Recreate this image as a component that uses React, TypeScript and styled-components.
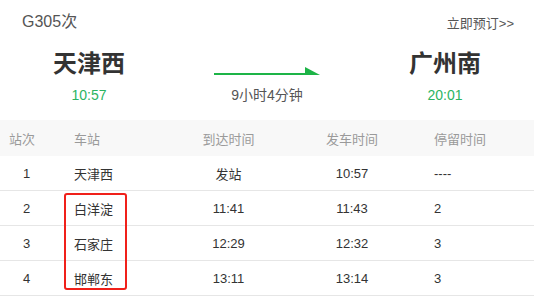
import React from "react";
import styled, { createGlobalStyle } from "styled-components";

const Global = createGlobalStyle`
  html, body { margin: 0; padding: 0; background: #fff; }
  body { font-family: "Liberation Sans", "Noto Sans CJK SC", sans-serif; color: #333; }
`;

const Page = styled.div`
  width: 534px;
  height: 302px;
  overflow: hidden;
`;

const TopBar = styled.div`
  display: flex;
  justify-content: space-between;
  align-items: center;
  padding: 0 20px 0 22px;
  height: 44px;
  line-height: 1;
`;

const TrainNo = styled.div`
  font-size: 16px;
  color: #555;
`;

const BookLink = styled.div`
  font-size: 13px;
  color: #555;
  padding-top: 2px;
`;

const Route = styled.div`
  display: grid;
  grid-template-columns: 1fr 1fr 1fr;
  height: 76px;
`;

const Endpoint = styled.div`
  display: flex;
  flex-direction: column;
  align-items: center;
  padding-top: 8px;
`;

const StationName = styled.div`
  font-size: 24px;
  font-weight: bold;
  color: #333;
  line-height: 24px;
`;

const Time = styled.div`
  font-size: 14px;
  color: #2bb462;
  line-height: 14px;
  margin-top: 12px;
`;

const Middle = styled.div`
  display: flex;
  flex-direction: column;
  align-items: center;
  padding-top: 23px;
`;

const ArrowSvg = styled.svg`
  display: block;
`;

const Duration = styled.div`
  font-size: 14px;
  color: #555;
  line-height: 14px;
  margin-top: 12px;
`;

const Table = styled.div`
  position: relative;
`;

const Row = styled.div<{ $head?: boolean }>`
  display: grid;
  grid-template-columns: 53px 112px 127px 120px 1fr;
  height: ${(p) => (p.$head ? "36px" : "34px")};
  align-items: center;
  background: ${(p) => (p.$head ? "#f8f8f8" : "#fff")};
  border-bottom: ${(p) => (p.$head ? "none" : "1px solid #e6e6e6")};
  font-size: 13px;
  color: ${(p) => (p.$head ? "#9a9a9a" : "#333")};
`;

const Cell = styled.div<{ $align: "left" | "center"; $pad?: number }>`
  text-align: ${(p) => p.$align};
  padding-left: ${(p) => p.$pad ?? 0}px;
  white-space: nowrap;
`;

const Highlight = styled.div`
  position: absolute;
  left: 64px;
  top: 73px;
  width: 59px;
  height: 93px;
  border: 2px solid #f0201a;
  border-radius: 3px;
`;

const rows = [
  ["1", "天津西", "发站", "10:57", "----"],
  ["2", "白洋淀", "11:41", "11:43", "2"],
  ["3", "石家庄", "12:29", "12:32", "3"],
  ["4", "邯郸东", "13:11", "13:14", "3"],
];

function Arrow() {
  return (
    <ArrowSvg width="107" height="9" viewBox="0 0 107 9">
      <rect x="0" y="6" width="92" height="2" fill="#1db447" />
      <polygon points="91,0 91,8 106,8" fill="#1db447" />
    </ArrowSvg>
  );
}

export default function App() {
  return (
    <Page>
      <Global />
      <TopBar>
        <TrainNo>G305次</TrainNo>
        <BookLink>立即预订&gt;&gt;</BookLink>
      </TopBar>
      <Route>
        <Endpoint>
          <StationName>天津西</StationName>
          <Time>10:57</Time>
        </Endpoint>
        <Middle>
          <Arrow />
          <Duration>9小时4分钟</Duration>
        </Middle>
        <Endpoint>
          <StationName>广州南</StationName>
          <Time>20:01</Time>
        </Endpoint>
      </Route>
      <Table>
        <Row $head>
          <Cell $align="left" $pad={9}>站次</Cell>
          <Cell $align="left" $pad={21}>车站</Cell>
          <Cell $align="center">到达时间</Cell>
          <Cell $align="center">发车时间</Cell>
          <Cell $align="left" $pad={22}>停留时间</Cell>
        </Row>
        {rows.map((r) => (
          <Row key={r[0]}>
            <Cell $align="center">{r[0]}</Cell>
            <Cell $align="left" $pad={21}>{r[1]}</Cell>
            <Cell $align="center">{r[2]}</Cell>
            <Cell $align="center">{r[3]}</Cell>
            <Cell $align="left" $pad={22}>{r[4]}</Cell>
          </Row>
        ))}
        <Highlight />
      </Table>
    </Page>
  );
}
